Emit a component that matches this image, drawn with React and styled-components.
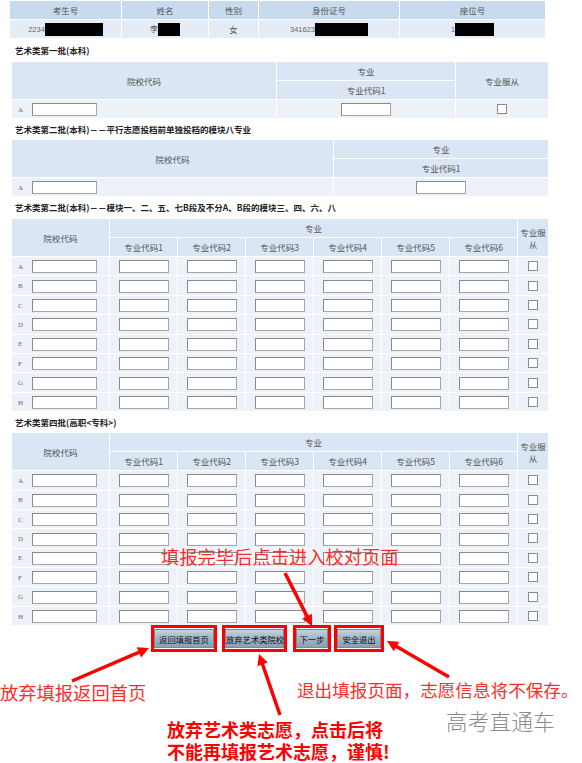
import React from 'react'
import styled, { createGlobalStyle } from 'styled-components'

const GlobalStyle = createGlobalStyle`
  html, body { margin: 0; padding: 0; background: #fff; }
  body { font-family: "Noto Sans CJK SC", "Noto Sans", sans-serif; }
`

const Page = styled.div`
  position: relative;
  width: 582px;
  height: 763px;
  overflow: hidden;
`

const InfoTable = styled.table`
  margin-left: 9px;
  width: 537px;
  table-layout: fixed;
  border-collapse: separate;
  border-spacing: 1px;
  th, td {
    height: 18px;
    padding: 0;
    text-align: center;
    vertical-align: middle;
    font-size: 8.5px;
    line-height: 12px;
    color: #555;
    font-weight: normal;
  }
  th { background: #c8dbee; }
  td { background: #e4edf7; }
`

const Digits = styled.span`
  font-family: "Liberation Sans", sans-serif;
  font-size: 7.5px;
  color: #666;
  vertical-align: middle;
`

const Redact = styled.span`
  display: inline-block;
  width: ${p => p.$w}px;
  height: 13px;
  background: #000;
  vertical-align: middle;
`

const SectionTitle = styled.div`
  height: ${p => p.$h}px;
  line-height: ${p => p.$h}px;
  padding-left: 15px;
  font-size: 8.5px;
  font-weight: bold;
  color: #222;
  white-space: nowrap;
`

const FormTable = styled.table`
  margin-left: 11px;
  width: 538px;
  table-layout: fixed;
  border-collapse: separate;
  border-spacing: 1px;
  th, td {
    padding: 0;
    text-align: center;
    vertical-align: middle;
    font-size: 8.5px;
    line-height: 12px;
    color: #555;
    font-weight: normal;
  }
  th {
    height: 18px;
    background: #dae6f3;
  }
  td {
    height: ${p => p.$rowH || 18}px;
    background: #edf2f9;
  }
`

const SchoolCell = styled.td`
  && { text-align: left; padding-left: 6px; }
`

const RowLabel = styled.span`
  display: inline-block;
  width: 14px;
  font-family: "Liberation Serif", serif;
  font-size: 7px;
  color: #666;
  vertical-align: middle;
`

const TextBox = styled.input.attrs({ type: 'text' })`
  box-sizing: border-box;
  width: ${p => p.$w}px;
  height: 13px;
  margin: 0;
  padding: 0;
  border: 1px solid #a6a6a6;
  border-top-color: #8a8a8a;
  border-left-color: #8a8a8a;
  background: #fff;
  vertical-align: middle;
`

const Check = styled.input.attrs({ type: 'checkbox' })`
  appearance: none;
  display: block;
  box-sizing: border-box;
  width: 10px;
  height: 10px;
  margin: 0 auto;
  border: 1px solid #8c8c8c;
  background: #fff;
`

const ButtonBar = styled.div`
  display: flex;
  padding-left: 151px;
  margin-top: -1px;
`

const Frame = styled.div`
  display: flex;
  margin-left: ${p => p.$gap || 0}px;
  padding: 1px 0;
  border: 3px solid #f00;
`

const Button = styled.button`
  width: ${p => p.$w}px;
  height: 19px;
  padding: 0;
  border: 1px solid #748b9d;
  background: linear-gradient(#c3d2de, #9cb1c2 55%, #8aa1b4);
  font-family: "Noto Sans CJK SC", sans-serif;
  font-size: 8.3px;
  color: #111;
  white-space: nowrap;
`

const Overlay = styled.div`
  position: absolute;
  inset: 0;
  pointer-events: none;
`

const Note = styled.div`
  position: absolute;
  left: ${p => p.$x}px;
  top: ${p => p.$y}px;
  font-size: ${p => p.$size}px;
  line-height: 22px;
  font-weight: ${p => (p.$bold ? 700 : 400)};
  color: ${p => (p.$bold ? '#f00' : '#ff2b2b')};
  white-space: nowrap;
`

const Watermark = styled.div`
  position: absolute;
  left: 446px;
  top: 708px;
  font-size: 21.5px;
  line-height: 26px;
  font-weight: 300;
  color: #8a8a8a;
  letter-spacing: 0.3px;
`

const Arrows = styled.svg`
  position: absolute;
  left: 0;
  top: 0;
`

const letters = ['A', 'B', 'C', 'D', 'E', 'F', 'G', 'H']
const codes = [1, 2, 3, 4, 5, 6]

function Arrow({ from, to }) {
  const [x1, y1] = from
  const [x2, y2] = to
  const len = Math.hypot(x2 - x1, y2 - y1)
  const ux = (x2 - x1) / len
  const uy = (y2 - y1) / len
  const L = 11
  const W = 5.5
  const bx = x2 - ux * L
  const by = y2 - uy * L
  const pts = `${x2},${y2} ${bx - uy * W},${by + ux * W} ${bx + uy * W},${by - ux * W}`
  return (
    <g>
      <line x1={x1} y1={y1} x2={bx + ux * 1} y2={by + uy * 1} stroke="#f00" strokeWidth="3.5" />
      <polygon points={pts} fill="#f00" />
    </g>
  )
}

function SixTable() {
  return (
    <FormTable $rowH={18.4}>
      <colgroup>
        <col style={{ width: 97 }} />
        {codes.map(c => <col key={c} style={{ width: 67 }} />)}
        <col style={{ width: 30 }} />
      </colgroup>
      <thead>
        <tr>
          <th rowSpan={2}>院校代码</th>
          <th colSpan={6}>专业</th>
          <th rowSpan={2}>专业服从</th>
        </tr>
        <tr>
          {codes.map(c => <th key={c}>专业代码{c}</th>)}
        </tr>
      </thead>
      <tbody>
        {letters.map(l => (
          <tr key={l}>
            <SchoolCell><RowLabel>{l}</RowLabel><TextBox $w={65} /></SchoolCell>
            {codes.map(c => <td key={c}><TextBox $w={50} /></td>)}
            <td><Check /></td>
          </tr>
        ))}
      </tbody>
    </FormTable>
  )
}

export default function App() {
  return (
    <Page>
      <GlobalStyle />
      <InfoTable>
        <colgroup>
          <col style={{ width: 111 }} />
          <col style={{ width: 86 }} />
          <col style={{ width: 49 }} />
          <col style={{ width: 140 }} />
          <col style={{ width: 145 }} />
        </colgroup>
        <thead>
          <tr>
            <th>考生号</th>
            <th>姓名</th>
            <th>性别</th>
            <th>身份证号</th>
            <th>座位号</th>
          </tr>
        </thead>
        <tbody>
          <tr>
            <td><Digits>2234</Digits><Redact $w={58} /></td>
            <td>李<Redact $w={22} /></td>
            <td>女</td>
            <td><Digits>341623</Digits><Redact $w={53} /></td>
            <td><Digits>1</Digits><Redact $w={39} /></td>
          </tr>
        </tbody>
      </InfoTable>

      <SectionTitle $h={22}>艺术类第一批(本科)</SectionTitle>
      <FormTable>
        <colgroup>
          <col style={{ width: 264 }} />
          <col style={{ width: 178 }} />
          <col style={{ width: 92 }} />
        </colgroup>
        <thead>
          <tr>
            <th rowSpan={2}>院校代码</th>
            <th>专业</th>
            <th rowSpan={2}>专业服从</th>
          </tr>
          <tr><th>专业代码1</th></tr>
        </thead>
        <tbody>
          <tr>
            <SchoolCell><RowLabel>A</RowLabel><TextBox $w={65} /></SchoolCell>
            <td><TextBox $w={50} /></td>
            <td><Check /></td>
          </tr>
        </tbody>
      </FormTable>

      <SectionTitle $h={20}>艺术类第二批(本科)－－平行志愿投档前单独投档的模块八专业</SectionTitle>
      <FormTable>
        <colgroup>
          <col style={{ width: 321 }} />
          <col style={{ width: 214 }} />
        </colgroup>
        <thead>
          <tr>
            <th rowSpan={2}>院校代码</th>
            <th>专业</th>
          </tr>
          <tr><th>专业代码1</th></tr>
        </thead>
        <tbody>
          <tr>
            <SchoolCell><RowLabel>A</RowLabel><TextBox $w={65} /></SchoolCell>
            <td><TextBox $w={50} /></td>
          </tr>
        </tbody>
      </FormTable>

      <SectionTitle $h={21}>艺术类第二批(本科)－－模块一、二、五、七B段及不分A、B段的模块三、四、六、八</SectionTitle>
      <SixTable />

      <SectionTitle $h={20}>艺术类第四批(高职&lt;专科&gt;)</SectionTitle>
      <SixTable />

      <ButtonBar>
        <Frame><Button $w={60}>返回填报首页</Button></Frame>
        <Frame $gap={5}><Button $w={59}>放弃艺术类院校</Button></Frame>
        <Frame $gap={6}><Button $w={32}>下一步</Button></Frame>
        <Frame $gap={3}><Button $w={44}>安全退出</Button></Frame>
      </ButtonBar>

      <Overlay>
        <Arrows width="582" height="763" viewBox="0 0 582 763">
          <Arrow from={[285, 573]} to={[312, 626]} />
          <Arrow from={[72, 681]} to={[149, 648]} />
          <Arrow from={[449, 677]} to={[387, 641]} />
          <Arrow from={[280, 715]} to={[259, 654]} />
        </Arrows>
        <Note $x={161} $y={545} $size={18.3}>填报完毕后点击进入校对页面</Note>
        <Note $x={0} $y={681} $size={18.3}>放弃填报返回首页</Note>
        <Note $x={297} $y={679} $size={17.6}>退出填报页面，志愿信息将不保存。</Note>
        <Note $x={167} $y={718} $size={18} $bold>
          放弃艺术类志愿，点击后将<br />不能再填报艺术志愿，谨慎!
        </Note>
        <Watermark>高考直通车</Watermark>
      </Overlay>
    </Page>
  )
}
